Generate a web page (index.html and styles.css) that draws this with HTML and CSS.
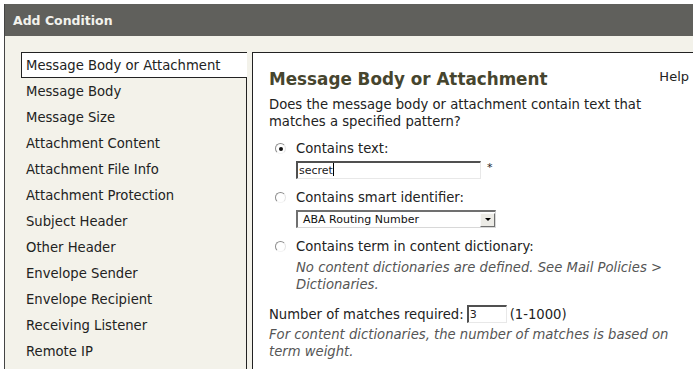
FILE: index.html
```html
<!DOCTYPE html>
<html>
<head>
<link rel="stylesheet" href="styles.css">
</head>
<body>
  <div class="dialog">
    <div class="dialog-head">Add Condition</div>
    <div class="dialog-body">
      <div class="cond-list">
        <div class="cond-item selected">Message Body or Attachment</div>
        <div class="cond-item">Message Body</div>
        <div class="cond-item">Message Size</div>
        <div class="cond-item">Attachment Content</div>
        <div class="cond-item">Attachment File Info</div>
        <div class="cond-item">Attachment Protection</div>
        <div class="cond-item">Subject Header</div>
        <div class="cond-item">Other Header</div>
        <div class="cond-item">Envelope Sender</div>
        <div class="cond-item">Envelope Recipient</div>
        <div class="cond-item">Receiving Listener</div>
        <div class="cond-item">Remote IP</div>
      </div>
      <div class="panel">
        <div class="panel-head">
          <div class="panel-title">Message Body or Attachment</div>
          <div class="help">Help</div>
        </div>
        <div class="desc">Does the message body or attachment contain text that<br>matches a specified pattern?</div>

        <div class="opt first">
          <span class="radio checked"></span>
          <span>Contains text:</span>
        </div>
        <div class="field-row">
          <div class="textbox wide">secret<span class="caret"></span></div>
          <span class="req">*</span>
        </div>

        <div class="opt">
          <span class="radio"></span>
          <span>Contains smart identifier:</span>
        </div>
        <div class="field-row">
          <div class="selectbox">
            <span>ABA Routing Number</span>
            <span class="sel-btn"><span class="arrow"></span></span>
          </div>
        </div>

        <div class="opt">
          <span class="radio"></span>
          <span>Contains term in content dictionary:</span>
        </div>
        <div class="note indent">No content dictionaries are defined. See Mail Policies &gt;<br>Dictionaries.</div>

        <div class="matches">
          <span>Number of matches required:</span>
          <div class="textbox small">3</div>
          <span>(1-1000)</span>
        </div>
        <div class="note last">For content dictionaries, the number of matches is based on<br>term weight.</div>
      </div>
    </div>
  </div>
</body>
</html>
```

FILE: styles.css
```css
html, body{
  margin: 0;
  padding: 0;
  background-color: #fff;
  height: 369px;
  overflow: hidden;
}

body{
  font-family: "DejaVu Sans", Verdana, sans-serif;
  font-size: 13.2px;
  color: #222;
}

.dialog{
  margin: 4px 3px 0 4px;
  border-left: 1px solid #444;
  height: 365px;
  background-color: #f3f2ea;
  overflow: hidden;
}

.dialog-head{
  height: 32px;
  line-height: 33px;
  background-color: #60605c;
  color: #f2f2ec;
  font-weight: bold;
  font-size: 12.5px;
  padding-left: 9px;
  margin-left: -1px;
}

.dialog-body{
  display: flex;
  gap: 5px;
  padding: 16px 0 0 16px;
}

.cond-list{
  width: 225px;
  height: 317px;
  border-right: 1px solid #222;
  flex-shrink: 0;
}

.cond-item{
  height: 26px;
  line-height: 28px;
  padding-left: 5px;
  white-space: nowrap;
}

.cond-item.selected{
  background-color: #fff;
  border: 1px solid #222;
  border-right: none;
  height: 24px;
  line-height: 26px;
  margin-right: -1px;
  padding-left: 4px;
}

.panel{
  flex: 1;
  background-color: #fff;
  border-left: 1px solid #222;
  border-top: 1px solid #222;
  padding: 15px 4px 0 16px;
  height: 301px;
}

.panel-head{
  display: flex;
  justify-content: space-between;
  align-items: flex-start;
}

.panel-title{
  font-size: 16.8px;
  font-weight: bold;
  color: #46452e;
  line-height: 22px;
}

.help{
  font-size: 13px;
  line-height: 18px;
}

.desc{
  margin-top: 6px;
  line-height: 17px;
}

.opt{
  display: flex;
  align-items: center;
  gap: 10px;
  margin-top: 10px;
  padding-left: 6px;
  line-height: 17px;
}

.opt.first{
  margin-top: 10px;
}

.radio{
  width: 11px;
  height: 11px;
  border-radius: 50%;
  border: 1px solid;
  border-color: #8d8d8d #e4e4e4 #f4f4f4 #8d8d8d;
  background-color: #fff;
  position: relative;
  box-sizing: border-box;
}

.radio.checked::after{
  content: "";
  position: absolute;
  left: 3px;
  top: 3px;
  width: 4px;
  height: 4px;
  border-radius: 50%;
  background-color: #111;
}

.field-row{
  display: flex;
  align-items: flex-start;
  margin-top: 4px;
  padding-left: 27px;
}

.textbox{
  height: 18px;
  box-sizing: border-box;
  border-top: 2px solid #505050;
  border-left: 2px solid #505050;
  border-right: 1px solid #e8e8e8;
  border-bottom: 1px solid #e8e8e8;
  font-size: 11px;
  line-height: 15px;
  padding-left: 1px;
  background-color: #fff;
}

.textbox.wide{
  width: 185px;
}

.caret{
  display: inline-block;
  width: 1px;
  height: 13px;
  background-color: #000;
  vertical-align: -2px;
}

.req{
  margin-left: 6px;
  font-size: 11px;
  line-height: 14px;
}

.selectbox{
  width: 200px;
  height: 18px;
  box-sizing: border-box;
  border-top: 2px solid #707070;
  border-left: 2px solid #707070;
  border-right: 1px solid #d8d8d8;
  border-bottom: 1px solid #d8d8d8;
  display: flex;
  justify-content: space-between;
  align-items: center;
  font-size: 11px;
  padding-left: 5px;
  color: #111;
}

.sel-btn{
  width: 15px;
  height: 14px;
  box-sizing: border-box;
  background-color: #ecebe6;
  border: 1px solid;
  border-color: #fafafa #707070 #707070 #fafafa;
  display: flex;
  align-items: center;
  justify-content: center;
}

.arrow{
  width: 0;
  height: 0;
  border-left: 3px solid transparent;
  border-right: 3px solid transparent;
  border-top: 3px solid #000;
}

.note{
  font-style: italic;
  color: #555;
  line-height: 17px;
}

.note.indent{
  padding-left: 27px;
  margin-top: 4px;
}

.note.last{
  margin-top: 3px;
}

.matches{
  display: flex;
  align-items: center;
  gap: 3px;
  margin-top: 12px;
}

.textbox.small{
  width: 40px;
  margin-left: 0;
}
```
